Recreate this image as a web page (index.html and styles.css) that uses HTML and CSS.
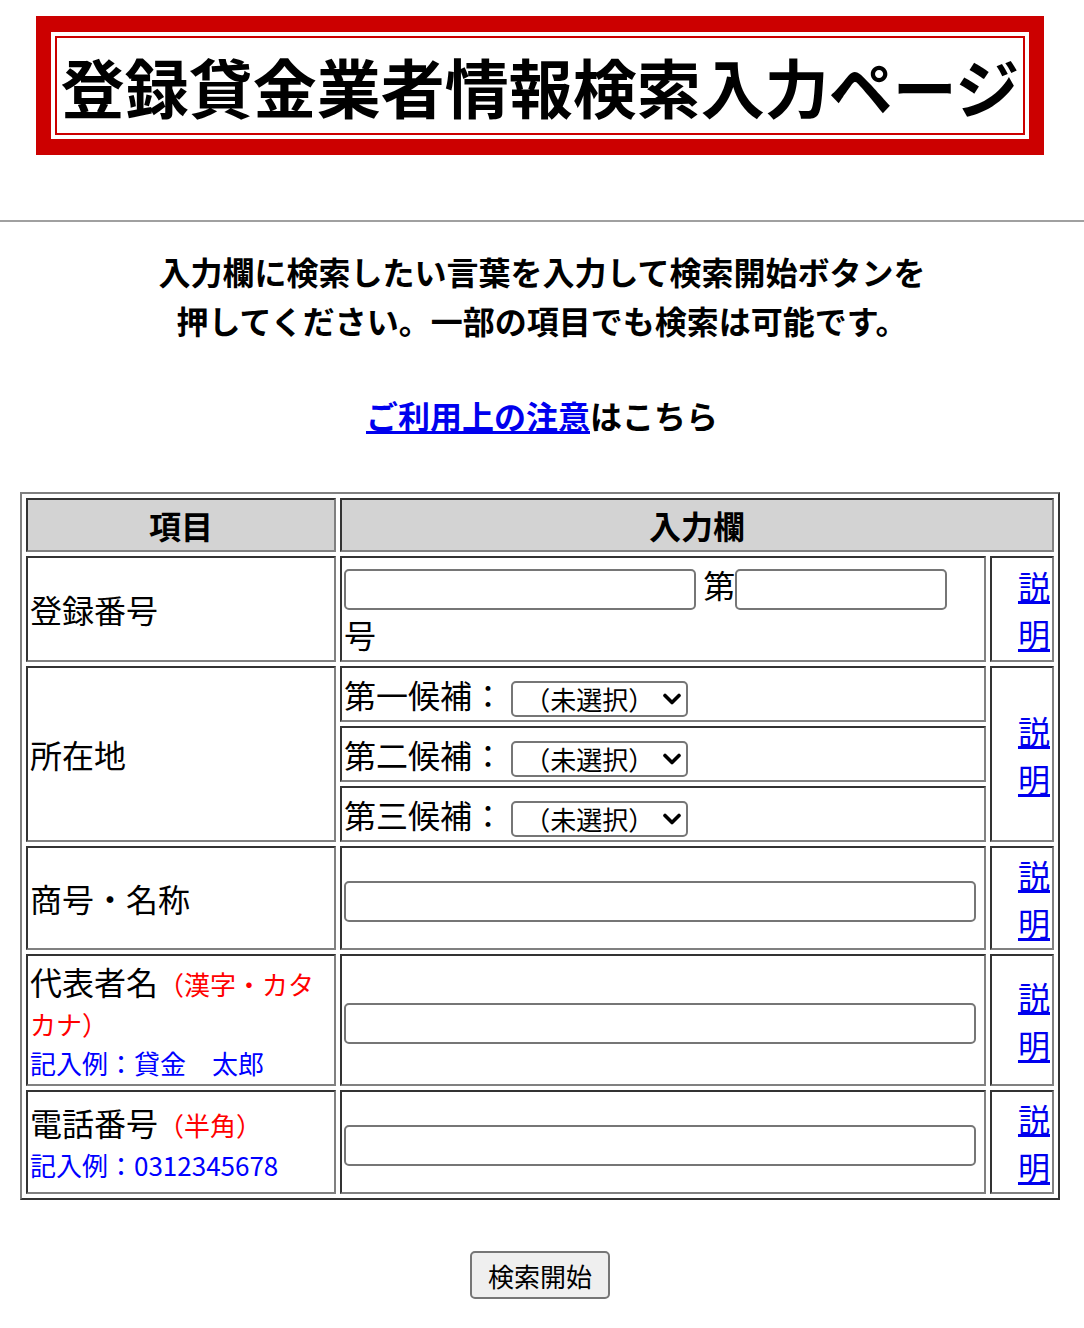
FILE: index.html
```html
<!DOCTYPE html>
<html lang="ja">
<head>
  <meta charset="utf-8">
  <title>登録貸金業者情報検索入力ページ</title>
  <link rel="stylesheet" href="styles.css">
</head>

<body>
  <div class="title-frame">
    <div class="title-inner">
      <h1>登録貸金業者情報検索入力ページ</h1>
    </div>
  </div>

  <hr class="rule">

  <p class="lead">入力欄に検索したい言葉を入力して検索開始ボタンを押してください。一部の項目でも検索は可能です。</p>

  <p class="notice"><a href="#">ご利用上の注意</a>はこちら</p>

  <form class="search-form">
    <table class="search-table">
      <colgroup>
        <col class="col-item">
        <col class="col-input">
        <col class="col-help">
      </colgroup>
      <tr>
        <th>項目</th>
        <th colspan="2">入力欄</th>
      </tr>

      <tr>
        <td>登録番号</td>
        <td class="field-lines"><input type="text" class="num-a"> 第<input type="text" class="num-b"><br>号</td>
        <td class="help"><a href="#">説明</a></td>
      </tr>

      <tr>
        <td rowspan="3">所在地</td>
        <td class="field-lines">第一候補： <span class="select-wrap"><select><option>（未選択）</option></select><svg class="chevron" viewBox="0 0 20 12"><path d="M3 2.5 L10 9.5 L17 2.5"/></svg></span></td>
        <td class="help" rowspan="3"><a href="#">説明</a></td>
      </tr>
      <tr>
        <td class="field-lines">第二候補： <span class="select-wrap"><select><option>（未選択）</option></select><svg class="chevron" viewBox="0 0 20 12"><path d="M3 2.5 L10 9.5 L17 2.5"/></svg></span></td>
      </tr>
      <tr>
        <td class="field-lines">第三候補： <span class="select-wrap"><select><option>（未選択）</option></select><svg class="chevron" viewBox="0 0 20 12"><path d="M3 2.5 L10 9.5 L17 2.5"/></svg></span></td>
      </tr>

      <tr>
        <td>商号・名称</td>
        <td><input type="text" class="wide"></td>
        <td class="help"><a href="#">説明</a></td>
      </tr>

      <tr>
        <td class="label-note"><span class="label">代表者名</span><span class="note">（漢字・カタカナ）</span><br><span class="example">記入例：貸金　太郎</span></td>
        <td><input type="text" class="wide"></td>
        <td class="help"><a href="#">説明</a></td>
      </tr>

      <tr>
        <td class="label-note"><span class="label">電話番号</span><span class="note">（半角）</span><br><span class="example">記入例：0312345678</span></td>
        <td><input type="text" class="wide"></td>
        <td class="help"><a href="#">説明</a></td>
      </tr>
    </table>

    <div class="actions">
      <button type="button">検索開始</button>
    </div>
  </form>
</body>

</html>
```

FILE: styles.css
```css
body {
  margin: 0;
  font-family: "Noto Sans CJK JP", sans-serif;
  font-size: 32px;
  color: black;
  background: white;
}

a {
  color: #0000ee;
}

.title-frame {
  margin: 16px 40px 0 36px;
  padding: 16px 15px;
  background-color: #cc0000;
}

.title-inner {
  padding: 4px;
  background-color: white;
}

h1 {
  margin: 0;
  border: 2px solid #cc0000;
  font-size: 64px;
  line-height: 95px;
  text-align: center;
  white-space: nowrap;
}

.rule {
  margin: 65px 0 0;
  border: none;
  border-top: 2px solid #a0a0a0;
}

.lead {
  max-width: 780px;
  margin: 25px auto 0;
  font-weight: bold;
  line-height: 49px;
  text-align: center;
}

.notice {
  margin: 46px 0 0;
  font-weight: bold;
  line-height: 49px;
  text-align: center;
}

.search-form {
  margin: 52px 24px 0 20px;
}

.search-table {
  width: 100%;
  table-layout: fixed;
  border-collapse: separate;
  border-spacing: 4px;
  border: 2px solid;
  border-color: #808080 #333 #333 #808080;
}

.col-item {
  width: 310px;
}

.col-help {
  width: 64px;
}

.search-table th,
.search-table td {
  padding: 2px;
  border: 2px solid;
  border-color: #333 #808080 #808080 #333;
  vertical-align: middle;
}

.search-table th {
  background-color: #d3d3d3;
  font-weight: bold;
  text-align: center;
}

.search-table td.help {
  line-height: 48px;
  text-align: right;
}

.search-table td.field-lines {
  line-height: 48px;
}

.label-note {
  font-size: 26px;
  line-height: 39px;
}

.label {
  font-size: 32px;
  line-height: 46px;
}

.note {
  color: #ff0000;
}

.example {
  color: #0000ff;
}

input[type="text"] {
  box-sizing: border-box;
  height: 41px;
  margin: 0;
  padding: 2px 4px;
  border: 2px solid #767676;
  border-radius: 5px;
  font-size: 26px;
  font-family: inherit;
  vertical-align: middle;
}

.num-a {
  width: 352px;
}

.num-b {
  width: 212px;
}

.wide {
  width: 632px;
}

.select-wrap {
  position: relative;
  display: inline-block;
  vertical-align: middle;
  line-height: 0;
}

select {
  -webkit-appearance: none;
  appearance: none;
  box-sizing: border-box;
  width: 177px;
  height: 36px;
  margin: 0;
  padding: 0 34px 0 11px;
  border: 2px solid #767676;
  border-radius: 5px;
  background-color: white;
  color: black;
  font-size: 26px;
  line-height: 32px;
  font-family: inherit;
}

.chevron {
  position: absolute;
  right: 6px;
  top: 12px;
  width: 20px;
  height: 12px;
  pointer-events: none;
}

.chevron path {
  fill: none;
  stroke: black;
  stroke-width: 3.6;
  stroke-linecap: round;
  stroke-linejoin: round;
}

.actions {
  margin-top: 50px;
  text-align: center;
}

button {
  box-sizing: border-box;
  height: 48px;
  padding: 0 16px;
  border: 2px solid #767676;
  border-radius: 5px;
  background-color: #efefef;
  color: black;
  font-size: 26px;
  font-family: inherit;
}
```
